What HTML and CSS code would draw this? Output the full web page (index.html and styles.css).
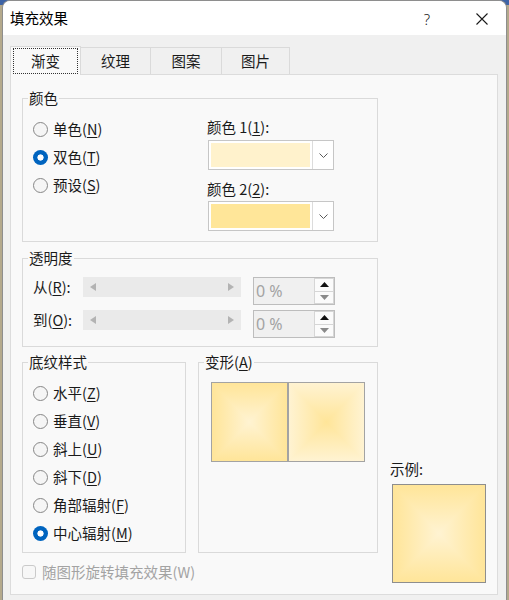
FILE: index.html
```html
<!DOCTYPE html>
<html lang="zh-CN">
<head>
<meta charset="utf-8">
<title>填充效果</title>
<link rel="stylesheet" href="styles.css">
</head>
<body>
<div class="dialog">
  <div class="titlebar">
    <span class="title">填充效果</span>
    <span class="help">?</span>
    <span class="close"><svg width="12" height="12" viewBox="0 0 12 12"><path d="M0.5 0.5 L11.5 11.5 M11.5 0.5 L0.5 11.5" stroke="#1a1a1a" stroke-width="1.1" fill="none"/></svg></span>
  </div>
  <div class="tabs">
    <div class="tab active t1"><span class="focus">渐变</span></div>
    <div class="tab t2">纹理</div>
    <div class="tab t3">图案</div>
    <div class="tab t4">图片</div>
  </div>
  <div class="panel">
    <div class="left">
      <div class="group g-color">
        <div class="gtitle">颜色</div>
        <div class="color-grid">
          <div class="radios">
            <div class="opt"><span class="radio"></span><span>单色(<u>N</u>)</span></div>
            <div class="opt"><span class="radio on"></span><span>双色(<u>T</u>)</span></div>
            <div class="opt"><span class="radio"></span><span>预设(<u>S</u>)</span></div>
          </div>
          <div class="pickers">
            <div class="plabel">颜色 1(<u>1</u>):</div>
            <div class="picker p1">
              <span class="swcell"><span class="swatch c1"></span></span>
              <span class="drop"><svg width="9" height="5" viewBox="0 0 9 5"><path d="M0.5 0.5 L4.5 4.5 L8.5 0.5" stroke="#5a5a5a" fill="none"/></svg></span>
            </div>
            <div class="plabel l2">颜色 2(<u>2</u>):</div>
            <div class="picker p2">
              <span class="swcell"><span class="swatch c2"></span></span>
              <span class="drop"><svg width="9" height="5" viewBox="0 0 9 5"><path d="M0.5 0.5 L4.5 4.5 L8.5 0.5" stroke="#5a5a5a" fill="none"/></svg></span>
            </div>
          </div>
        </div>
      </div>

      <div class="group g-trans">
        <div class="gtitle">透明度</div>
        <div class="trans-grid">
          <div class="tlabel">从(<u>R</u>):</div>
          <div class="slider">
            <svg width="6" height="8" viewBox="0 0 6 8"><path d="M6 0 L0 4 L6 8 Z" fill="#b3b3b3"/></svg>
            <svg width="6" height="8" viewBox="0 0 6 8"><path d="M0 0 L6 4 L0 8 Z" fill="#b3b3b3"/></svg>
          </div>
          <div class="spin">
            <span class="val">0 %</span>
            <span class="spinbtns">
              <span class="sb up"><svg width="9" height="5" viewBox="0 0 9 5"><path d="M0 5 L4.5 0 L9 5 Z" fill="#111"/></svg></span>
              <span class="sb dn"><svg width="9" height="5" viewBox="0 0 9 5"><path d="M0 0 L4.5 5 L9 0 Z" fill="#8a8a8a"/></svg></span>
            </span>
          </div>
          <div class="tlabel">到(<u>O</u>):</div>
          <div class="slider">
            <svg width="6" height="8" viewBox="0 0 6 8"><path d="M6 0 L0 4 L6 8 Z" fill="#b3b3b3"/></svg>
            <svg width="6" height="8" viewBox="0 0 6 8"><path d="M0 0 L6 4 L0 8 Z" fill="#b3b3b3"/></svg>
          </div>
          <div class="spin">
            <span class="val">0 %</span>
            <span class="spinbtns">
              <span class="sb up"><svg width="9" height="5" viewBox="0 0 9 5"><path d="M0 5 L4.5 0 L9 5 Z" fill="#111"/></svg></span>
              <span class="sb dn"><svg width="9" height="5" viewBox="0 0 9 5"><path d="M0 0 L4.5 5 L9 0 Z" fill="#8a8a8a"/></svg></span>
            </span>
          </div>
        </div>
      </div>

      <div class="row-bottom">
        <div class="group g-shade">
          <div class="gtitle">底纹样式</div>
          <div class="radios shade-list">
            <div class="opt"><span class="radio"></span><span>水平(<u>Z</u>)</span></div>
            <div class="opt"><span class="radio"></span><span>垂直(<u>V</u>)</span></div>
            <div class="opt"><span class="radio"></span><span>斜上(<u>U</u>)</span></div>
            <div class="opt"><span class="radio"></span><span>斜下(<u>D</u>)</span></div>
            <div class="opt"><span class="radio"></span><span>角部辐射(<u>F</u>)</span></div>
            <div class="opt"><span class="radio on"></span><span>中心辐射(<u>M</u>)</span></div>
          </div>
        </div>
        <div class="group g-variant">
          <div class="gtitle">变形(<u>A</u>)</div>
          <div class="variants">
            <div class="vbox grad-light"></div>
            <div class="vbox grad-dark"></div>
          </div>
        </div>
      </div>

      <div class="check">
        <span class="cbox"></span>
        <span>随图形旋转填充效果(W)</span>
      </div>
    </div>
    <div class="right">
      <div class="sample-label">示例:</div>
      <div class="sample grad-light"></div>
    </div>
  </div>
</div>
</body>
</html>
```

FILE: styles.css
```css
html, body {
  margin: 0;
  padding: 0;
  height: 600px;
  overflow: hidden;
}
body {
  background: linear-gradient(#3d63a6 0 5px, #b4a98c 5px);
  font-family: "Noto Sans CJK SC", "Microsoft YaHei", sans-serif;
  font-size: 14.5px;
  color: #1a1a1a;
}
u {
  text-decoration-thickness: 1px;
  text-underline-offset: 2px;
}
.dialog {
  margin-left: 2px;
  width: 505px;
  height: 600px;
  box-sizing: border-box;
  border: 1px solid #8e8e8e;
  border-bottom: none;
  border-radius: 8px 8px 0 0;
  background: #f0f0f0;
  overflow: hidden;
}
.titlebar {
  height: 34px;
  background: #ffffff;
  display: flex;
  align-items: center;
}
.title {
  margin-left: 7px;
  line-height: 20px;
  color: #000;
}
.help {
  margin-left: auto;
  width: 20px;
  text-align: center;
  font-family: "Noto Sans", sans-serif;
  font-size: 15px;
  font-weight: 300;
  color: #222;
  line-height: 20px;
  margin-top: 2px;
}
.close {
  margin-left: 35px;
  margin-right: 14px;
  width: 20px;
  height: 20px;
  display: flex;
  align-items: center;
  justify-content: center;
  margin-top: 2px;
}
.tabs {
  display: flex;
  align-items: flex-end;
  margin-top: 11px;
  margin-left: 7px;
  height: 28px;
}
.tab {
  box-sizing: border-box;
  height: 27px;
  border: 1px solid #dadada;
  border-bottom: none;
  background: #f0f0f0;
  margin-right: -1px;
  display: flex;
  align-items: center;
  justify-content: center;
  line-height: 20px;
}
.t1 { width: 71px; }
.t2 { width: 71px; }
.t3 { width: 72px; }
.t4 { width: 69px; }
.tab.active {
  height: 29px;
  margin-bottom: -1px;
  background: #f9f9f9;
  position: relative;
  z-index: 1;
  align-items: stretch;
  padding: 1px 2px 1px 2px;
}
.focus {
  flex: 1;
  border: 1px dotted #333;
  display: flex;
  align-items: center;
  justify-content: center;
}
.panel {
  box-sizing: border-box;
  margin-left: 7px;
  width: 488px;
  height: 521px;
  background: #f9f9f9;
  border: 1px solid #dcdcdc;
  padding-left: 11px;
  display: grid;
  grid-template-columns: 356px 1fr;
  column-gap: 12px;
  align-items: start;
}
.left {
  display: flex;
  flex-direction: column;
}
.group {
  box-sizing: border-box;
  border: 1px solid #dadada;
}
.gtitle {
  width: fit-content;
  margin: -11px 0 0 5px;
  padding: 0 1px;
  background: #f9f9f9;
  line-height: 20px;
}
.g-color {
  margin-top: 23px;
  height: 144px;
}
.color-grid {
  display: grid;
  grid-template-columns: 174px auto;
  padding: 7px 0 0 10px;
}
.opt {
  height: 28px;
  display: flex;
  align-items: center;
  gap: 5px;
  line-height: 20px;
}
.radio {
  box-sizing: border-box;
  width: 15px;
  height: 15px;
  flex: none;
  border-radius: 50%;
  border: 1px solid #878787;
  background: #f5f5f5;
}
.radio.on {
  border: none;
  background: radial-gradient(circle at center, #ffffff 0 2.8px, #0064bf 3.4px);
}
.pickers {
  padding-top: 2px;
}
.plabel {
  line-height: 20px;
}
.plabel.l2 {
  margin-top: 9px;
}
.picker {
  box-sizing: border-box;
  margin-left: 1px;
  width: 126px;
  height: 30px;
  border: 1px solid #c6c6c6;
  background: #ffffff;
  display: flex;
}
.p1 { margin-top: 3px; }
.p2 { margin-top: 2px; }
.swcell {
  box-sizing: border-box;
  width: 103px;
  padding: 2px;
  display: flex;
}
.swatch {
  flex: 1;
}
.c1 { background: #fff2cc; }
.c2 { background: #ffe699; }
.drop {
  flex: 1;
  border-left: 1px solid #dcdcdc;
  display: flex;
  align-items: center;
  justify-content: center;
}
.g-trans {
  margin-top: 16px;
  height: 89px;
}
.trans-grid {
  display: grid;
  grid-template-columns: 50px 158px 82px;
  grid-auto-rows: 28px;
  column-gap: 0;
  row-gap: 5px;
  padding: 9px 0 0 10px;
  align-items: start;
}
.trans-grid .spin {
  margin-left: 12px;
}
.tlabel {
  line-height: 20px;
}
.slider {
  height: 20px;
  background: #eaeaea;
  display: flex;
  align-items: center;
  justify-content: space-between;
  padding: 0 7px;
}
.spin {
  box-sizing: border-box;
  width: 82px;
  height: 28px;
  border: 1px solid #bdbdbd;
  background: #f0f0f0;
  display: flex;
}
.val {
  padding-left: 2px;
  line-height: 26px;
  color: #a3a3a3;
  font-family: "Noto Sans", sans-serif;
  font-size: 16px;
}
.spinbtns {
  margin-left: auto;
  width: 20px;
  display: flex;
  flex-direction: column;
}
.sb {
  flex: 1;
  box-sizing: border-box;
  border: 1px solid #d6d6d6;
  background: #fbfbfb;
  display: flex;
  align-items: center;
  justify-content: center;
}
.sb.dn {
  border-top: none;
}
.row-bottom {
  margin-top: 15px;
  display: flex;
  gap: 12px;
}
.g-shade {
  width: 164px;
  height: 191px;
}
.shade-list {
  padding: 7px 0 0 10px;
}
.g-variant {
  width: 180px;
  height: 191px;
}
.variants {
  display: flex;
  padding: 10px 0 0 12px;
}
.vbox {
  box-sizing: border-box;
  width: 77px;
  height: 80px;
  border: 1px solid #a3a3a3;
}
.grad-light {
  background:
    linear-gradient(to right, #ffe599 0%, #fff3d2 50%, #ffe599 100%),
    linear-gradient(to bottom, #ffe599 0%, #fff3d2 50%, #ffe599 100%);
  background-blend-mode: darken;
}
.grad-dark {
  background:
    linear-gradient(to right, #fff3d2 0%, #ffe599 50%, #fff3d2 100%),
    linear-gradient(to bottom, #fff3d2 0%, #ffe599 50%, #fff3d2 100%);
  background-blend-mode: lighten;
}
.check {
  margin-top: 9px;
  height: 20px;
  display: flex;
  align-items: center;
  line-height: 20px;
  color: #a3a3a3;
}
.cbox {
  box-sizing: border-box;
  width: 14px;
  height: 14px;
  border: 1px solid #cacaca;
  border-radius: 3px;
  background: #f7f7f7;
  margin-right: 6px;
}
.right {
  align-self: stretch;
  display: flex;
  flex-direction: column;
  justify-content: flex-end;
  padding-bottom: 11px;
}
.sample-label {
  line-height: 20px;
}
.sample {
  box-sizing: border-box;
  margin-top: 5px;
  margin-left: 2px;
  width: 94px;
  height: 99px;
  border: 1px solid #8e8e8e;
}
```
